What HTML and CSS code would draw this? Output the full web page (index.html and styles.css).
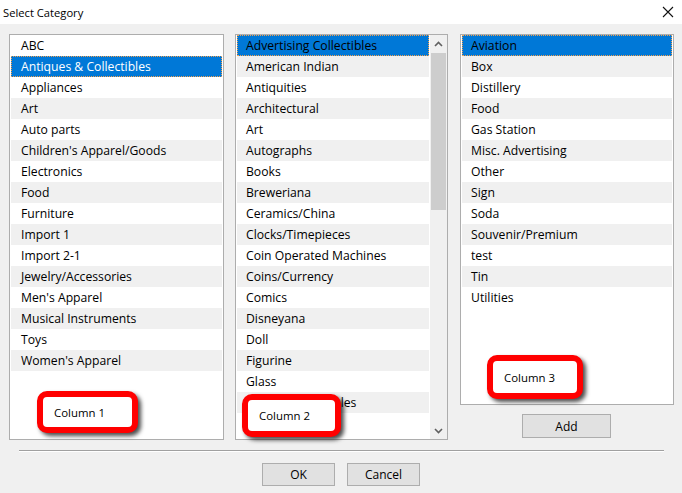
FILE: index.html
```html
<!DOCTYPE html>
<html lang="en">
<head>
  <meta charset="UTF-8">
  <meta name="viewport" content="width=device-width, initial-scale=1.0">
  <title>Select Category</title>
  <link rel="stylesheet" href="styles.css">
</head>
<body>
  <div class="window">
    <div class="titlebar">
      <span class="title">Select Category</span>
      <svg class="close" width="12" height="12" viewBox="0 0 12 12">
        <path d="M1 1 L11 11 M11 1 L1 11" stroke="#111" stroke-width="1.1" fill="none"/>
      </svg>
    </div>

    <div class="dialog">
      <div class="lists">
        <div class="listbox col1">
          <ul class="items">
            <li>ABC</li>
            <li class="selected active">Antiques &amp; Collectibles</li>
            <li>Appliances</li>
            <li>Art</li>
            <li>Auto parts</li>
            <li>Children's Apparel/Goods</li>
            <li>Electronics</li>
            <li>Food</li>
            <li>Furniture</li>
            <li>Import 1</li>
            <li>Import 2-1</li>
            <li>Jewelry/Accessories</li>
            <li>Men's Apparel</li>
            <li>Musical Instruments</li>
            <li>Toys</li>
            <li>Women's Apparel</li>
          </ul>
        </div>

        <div class="listbox col2">
          <ul class="items">
            <li class="selected">Advertising Collectibles</li>
            <li>American Indian</li>
            <li>Antiquities</li>
            <li>Architectural</li>
            <li>Art</li>
            <li>Autographs</li>
            <li>Books</li>
            <li>Breweriana</li>
            <li>Ceramics/China</li>
            <li>Clocks/Timepieces</li>
            <li>Coin Operated Machines</li>
            <li>Coins/Currency</li>
            <li>Comics</li>
            <li>Disneyana</li>
            <li>Doll</li>
            <li>Figurine</li>
            <li>Glass</li>
            <li>Holiday Collectibles</li>
            <li>Kitchen</li>
          </ul>
          <div class="scrollbar">
            <div class="arrow">
              <svg width="9" height="6" viewBox="0 0 9 6"><path d="M1 5 L4.5 1.5 L8 5" stroke="#606060" stroke-width="1.6" fill="none"/></svg>
            </div>
            <div class="track">
              <div class="thumb"></div>
            </div>
            <div class="arrow">
              <svg width="9" height="6" viewBox="0 0 9 6"><path d="M1 1 L4.5 4.5 L8 1" stroke="#606060" stroke-width="1.6" fill="none"/></svg>
            </div>
          </div>
        </div>

        <div class="col3-wrap">
          <div class="listbox col3">
            <ul class="items">
              <li class="selected">Aviation</li>
              <li>Box</li>
              <li>Distillery</li>
              <li>Food</li>
              <li>Gas Station</li>
              <li>Misc. Advertising</li>
              <li>Other</li>
              <li>Sign</li>
              <li>Soda</li>
              <li>Souvenir/Premium</li>
              <li>test</li>
              <li>Tin</li>
              <li>Utilities</li>
            </ul>
          </div>
          <button class="btn add">Add</button>
        </div>
      </div>

      <div class="separator"></div>

      <div class="actions">
        <button class="btn">OK</button>
        <button class="btn">Cancel</button>
      </div>
    </div>

    <div class="callout c1">Column 1</div>
    <div class="callout c2">Column 2</div>
    <div class="callout c3">Column 3</div>
  </div>
</body>
</html>
```

FILE: styles.css
```css
body {
  margin: 0;
  padding: 0;
  font-family: 'Open Sans', 'Noto Sans', sans-serif;
  font-size: 12px;
  color: #000;
  background-color: #f0f0f0;
}

.window {
  position: relative;
  width: 682px;
  height: 493px;
  overflow: hidden;
  background-color: #f0f0f0;
}

.titlebar {
  height: 24px;
  background-color: #ffffff;
  display: flex;
  align-items: center;
  justify-content: space-between;
  padding: 0 8px 0 3px;
}

.title {
  font-size: 11.2px;
  color: #000;
}

.close {
  display: block;
}

.dialog {
  padding: 10px 0 0 9px;
}

.lists {
  display: flex;
  align-items: flex-start;
}

.listbox {
  position: relative;
  box-sizing: border-box;
  border: 1px solid #adadad;
  background-color: #ffffff;
  overflow: hidden;
}

.col1 {
  width: 215px;
  height: 406px;
}

.col2 {
  width: 213px;
  height: 406px;
  margin-left: 11px;
  display: flex;
}

.col3-wrap {
  margin-left: 12px;
  width: 214px;
  display: flex;
  flex-direction: column;
  align-items: center;
}

.col3 {
  width: 214px;
  height: 371px;
}

.items {
  list-style: none;
  margin: 0;
  padding: 0 1px;
  flex: 1;
}

.items li {
  box-sizing: border-box;
  height: 21px;
  line-height: 20px;
  padding-top: 1px;
  padding-left: 10px;
  white-space: nowrap;
  font-size: 12.2px;
  color: #000;
}

.col2 .items li,
.col3 .items li {
  padding-left: 9px;
}

.items li:nth-child(even) {
  background-color: #f0f0f0;
}

.items li.selected {
  background-color: #0078d7;
  border: 1px dotted #f0a050;
  line-height: 19px;
  padding-top: 0;
  padding-left: 9px;
}

.col2 .items li.selected,
.col3 .items li.selected {
  padding-left: 8px;
}

.items li.active {
  color: #ffffff;
}

.scrollbar {
  width: 17px;
  height: 100%;
  background-color: #f0f0f0;
  display: flex;
  flex-direction: column;
  flex-shrink: 0;
}

.arrow {
  height: 17px;
  display: flex;
  align-items: center;
  justify-content: center;
}

.track {
  flex: 1;
  padding: 1px 1px 0;
}

.thumb {
  height: 157px;
  background-color: #cdcdcd;
}

.btn {
  box-sizing: border-box;
  width: 73px;
  height: 23px;
  background-color: #e1e1e1;
  border: 1px solid #adadad;
  font-family: 'Open Sans', 'Noto Sans', sans-serif;
  font-size: 12px;
  color: #000;
  padding: 0;
}

.add {
  width: 89px;
  height: 24px;
  margin-top: 9px;
  margin-right: 1px;
}

.separator {
  margin: 10px 0 0 10px;
  width: 645px;
  height: 1px;
  background-color: #a0a0a0;
  border-bottom: 1px solid #ffffff;
}

.actions {
  display: flex;
  justify-content: center;
  gap: 12px;
  margin-top: 11px;
  padding-right: 9px;
}

.callout {
  position: absolute;
  box-sizing: border-box;
  display: flex;
  align-items: center;
  padding-left: 11px;
  background-color: #ffffff;
  border: 6px solid #ff0000;
  border-radius: 10px;
  box-shadow: 3px 3px 4px rgba(0, 0, 0, 0.7);
  font-size: 11.4px;
  color: #000;
}

.c1 {
  left: 37px;
  top: 391px;
  width: 101px;
  height: 42px;
}

.c2 {
  left: 242px;
  top: 394px;
  width: 99px;
  height: 43px;
}

.c3 {
  left: 487px;
  top: 355px;
  width: 96px;
  height: 44px;
}
```
